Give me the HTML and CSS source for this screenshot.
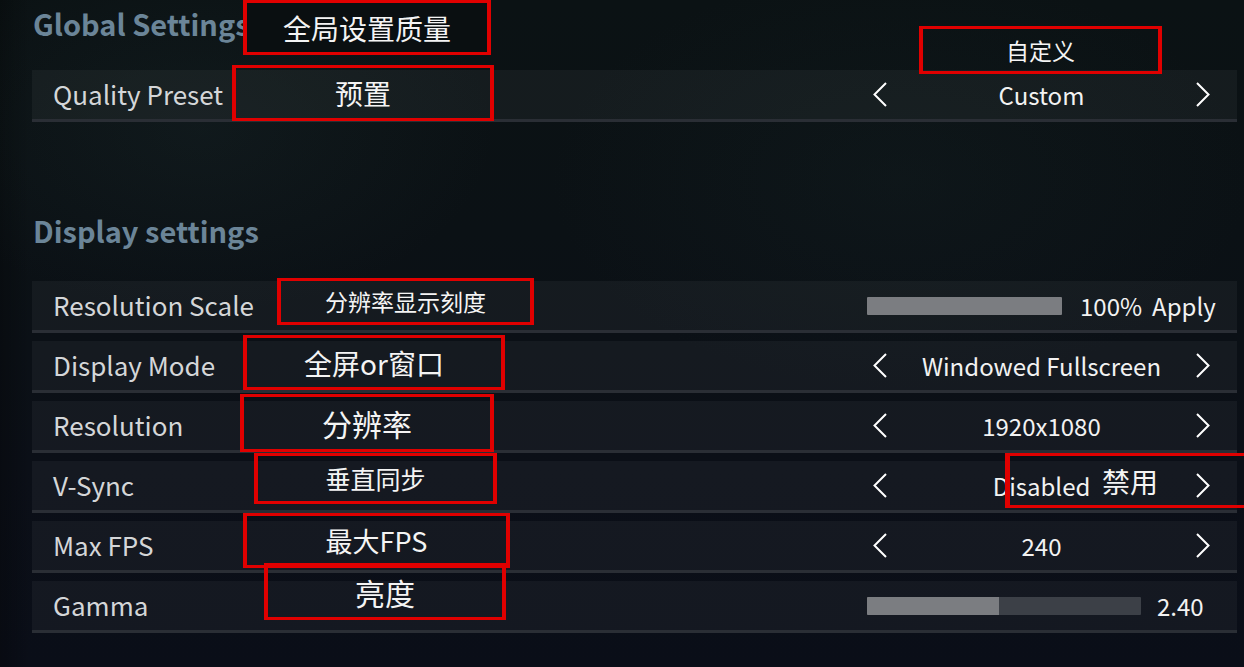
FILE: index.html
```html
<!DOCTYPE html>
<html lang="en">
<head>
<meta charset="utf-8">
<title>Settings</title>
<link rel="stylesheet" href="styles.css">
</head>
<body>
<div class="screen">
  <section class="group group-global">
    <h2 class="group-title">Global Settings</h2>
    <div class="row">
      <span class="label">Quality Preset</span>
      <div class="selector">
        <svg class="chev" viewBox="0 0 14 25"><polyline points="13,1 1.5,12.5 13,24"/></svg>
        <span class="value">Custom</span>
        <svg class="chev" viewBox="0 0 14 25"><polyline points="1,1 12.5,12.5 1,24"/></svg>
      </div>
    </div>
  </section>

  <section class="group group-display">
    <h2 class="group-title">Display settings</h2>
    <div class="rows">
      <div class="row">
        <span class="label">Resolution Scale</span>
        <div class="slider">
          <div class="track track-scale"><div class="fill" style="width:100%"></div></div>
          <span class="value-text">100%</span>
          <span class="value-text apply">Apply</span>
        </div>
      </div>
      <div class="row">
        <span class="label">Display Mode</span>
        <div class="selector">
          <svg class="chev" viewBox="0 0 14 25"><polyline points="13,1 1.5,12.5 13,24"/></svg>
          <span class="value">Windowed Fullscreen</span>
          <svg class="chev" viewBox="0 0 14 25"><polyline points="1,1 12.5,12.5 1,24"/></svg>
        </div>
      </div>
      <div class="row">
        <span class="label">Resolution</span>
        <div class="selector">
          <svg class="chev" viewBox="0 0 14 25"><polyline points="13,1 1.5,12.5 13,24"/></svg>
          <span class="value">1920x1080</span>
          <svg class="chev" viewBox="0 0 14 25"><polyline points="1,1 12.5,12.5 1,24"/></svg>
        </div>
      </div>
      <div class="row">
        <span class="label">V-Sync</span>
        <div class="selector">
          <svg class="chev" viewBox="0 0 14 25"><polyline points="13,1 1.5,12.5 13,24"/></svg>
          <span class="value">Disabled</span>
          <svg class="chev" viewBox="0 0 14 25"><polyline points="1,1 12.5,12.5 1,24"/></svg>
        </div>
      </div>
      <div class="row">
        <span class="label">Max FPS</span>
        <div class="selector">
          <svg class="chev" viewBox="0 0 14 25"><polyline points="13,1 1.5,12.5 13,24"/></svg>
          <span class="value">240</span>
          <svg class="chev" viewBox="0 0 14 25"><polyline points="1,1 12.5,12.5 1,24"/></svg>
        </div>
      </div>
      <div class="row">
        <span class="label">Gamma</span>
        <div class="slider">
          <div class="track track-gamma"><div class="fill" style="width:48%"></div></div>
          <span class="value-text">2.40</span>
        </div>
      </div>
    </div>
  </section>

  <div class="notes">
    <div class="note note-global">全局设置质量</div>
    <div class="note note-preset">预置</div>
    <div class="note note-custom">自定义</div>
    <div class="note note-scale">分辨率显示刻度</div>
    <div class="note note-mode">全屏or窗口</div>
    <div class="note note-res">分辨率</div>
    <div class="note note-vsync">垂直同步</div>
    <div class="note note-disabled">禁用</div>
    <div class="note note-fps">最大FPS</div>
    <div class="note note-gamma">亮度</div>
  </div>
</div>
</body>
</html>
```

FILE: styles.css
```css
html, body {
  margin: 0;
  padding: 0;
}

body {
  width: 1244px;
  height: 667px;
  overflow: hidden;
  font-family: "Noto Sans CJK SC", "Noto Sans", sans-serif;
  background:
    radial-gradient(ellipse 420px 260px at 200px 130px, rgba(40, 60, 62, 0.18), transparent 70%),
    radial-gradient(ellipse 500px 300px at 900px 180px, rgba(30, 48, 50, 0.16), transparent 70%),
    linear-gradient(90deg, rgba(0, 0, 0, 0.25) 0, transparent 30px),
    linear-gradient(180deg, #0b1214 0%, #0b1115 35%, #0b0f17 70%, #0a0e18 100%);
}

.screen {
  position: relative;
  height: 667px;
  box-sizing: border-box;
  padding: 0 7px 0 32px;
}

.group-title {
  margin: 0;
  height: 50px;
  line-height: 46px;
  padding-left: 1px;
  font-size: 29px;
  font-weight: 700;
  color: #6b8598;
}

.group-global .group-title {
  margin-bottom: 20px;
}

.group-display {
  margin-top: 85px;
}

.rows {
  margin-top: 24px;
  display: flex;
  flex-direction: column;
  gap: 8px;
}

.row {
  height: 49px;
  display: flex;
  align-items: center;
  padding-left: 21px;
  background: rgba(255, 255, 255, 0.045);
  border-bottom: 3px solid #2a2e35;
}

.label {
  flex: 1;
  font-size: 26px;
  line-height: 1;
  color: #d4d6d8;
  margin-top: -2px;
}

.selector {
  width: 337px;
  margin-right: 27px;
  display: flex;
  align-items: center;
}

.value {
  flex: 1;
  text-align: center;
  font-size: 24px;
  line-height: 1;
  color: #f2f2f2;
}

.chev {
  width: 14px;
  height: 25px;
  fill: none;
  stroke: #ffffff;
  stroke-width: 2;
}

.slider {
  width: 370px;
  display: flex;
  align-items: center;
}

.track {
  height: 18px;
  background: #3c4047;
  border-radius: 1px;
  overflow: hidden;
}

.track-scale {
  width: 195px;
  margin-right: 18px;
}

.track-gamma {
  width: 274px;
  margin-right: 16px;
}

.fill {
  height: 100%;
  background: #7b7d81;
}

.value-text {
  font-size: 24px;
  line-height: 1;
  color: #f2f2f2;
}

.apply {
  margin-left: 10px;
}

.notes {
  position: absolute;
  inset: 0;
  pointer-events: none;
}

.note {
  position: absolute;
  box-sizing: border-box;
  display: flex;
  align-items: center;
  justify-content: center;
  border: 3px solid #e00000;
  border-left-width: 4px;
  border-right-width: 4px;
  color: #f4f4f4;
  font-family: "Noto Sans CJK SC", sans-serif;
  font-size: 28px;
  line-height: 1;
}

.note-global {
  left: 243px; top: 0; width: 248px; height: 55px;
  background: #0a0f11;
}

.note-preset {
  left: 232px; top: 65px; width: 262px; height: 56px;
}

.note-custom {
  left: 919px; top: 26px; width: 243px; height: 48px;
  font-size: 23px;
}

.note-scale {
  left: 277px; top: 278px; width: 257px; height: 47px;
  font-size: 23px;
}

.note-mode {
  left: 243px; top: 335px; width: 262px; height: 55px;
}

.note-res {
  left: 240px; top: 394px; width: 254px; height: 58px;
  font-size: 30px;
}

.note-vsync {
  left: 254px; top: 453px; width: 243px; height: 51px;
  font-size: 25px;
}

.note-disabled {
  left: 1005px; top: 453px; width: 260px; height: 55px;
  justify-content: flex-start;
  padding-left: 92px;
  border-left-width: 5px;
}

.note-fps {
  left: 243px; top: 513px; width: 267px; height: 55px;
  font-size: 27px;
}

.note-gamma {
  left: 264px; top: 563px; width: 242px; height: 57px;
  font-size: 30px;
}
```
